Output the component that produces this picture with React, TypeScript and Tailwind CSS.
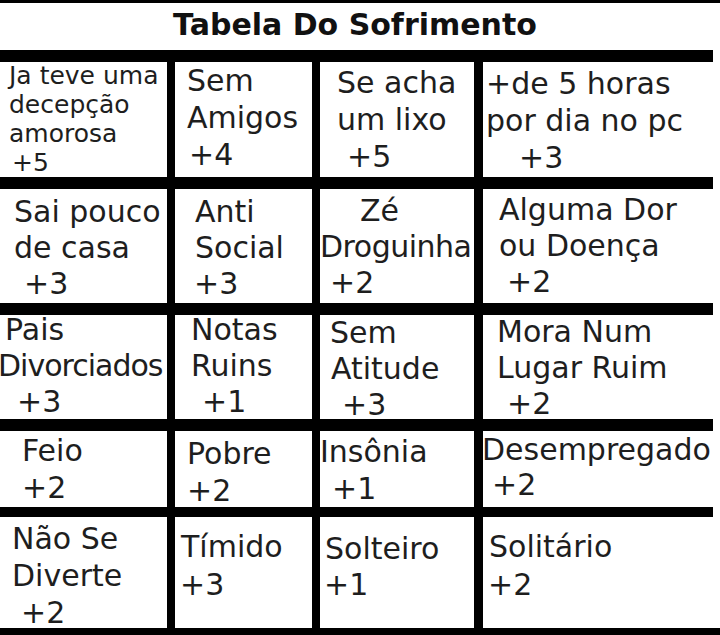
import clsx from "clsx";

type Line = [string, string?];
type Cell = { cls: string; lines: Line[] };
type Row = { cls: string; cells: Cell[] };

// column widths incl. the black separator on the left of cols 2-4
const cols = [
  "w-[167px]",
  "w-[145px] border-l-[8px] border-black",
  "w-[162px] border-l-[8px] border-black",
  "w-[239px] border-l-[9px] border-black",
];

const rows: Row[] = [
  {
    cls: "h-[127px] border-t-[12px]",
    cells: [
      {
        cls: "text-[25px] leading-[29px] pl-[9px] -mt-[1px]",
        lines: [["Ja teve uma"], ["decepção"], ["amorosa"], ["+5", "pl-[3px]"]],
      },
      { cls: "text-[30px] leading-[37px] pl-[12px]", lines: [["Sem"], ["Amigos"], ["+4", "pl-[2px]"]] },
      { cls: "text-[30px] leading-[37px] pl-[17px] pt-[2px]", lines: [["Se acha"], ["um lixo"], ["+5", "pl-[10px]"]] },
      { cls: "text-[30px] leading-[37px] pl-[3px] pt-[3px]", lines: [["+de 5 horas"], ["por dia no pc"], ["+3", "pl-[33px]"]] },
    ],
  },
  {
    cls: "h-[126px] border-t-[12px]",
    cells: [
      { cls: "text-[30px] leading-[36px] pl-[14px] pt-[5px]", lines: [["Sai pouco"], ["de casa"], ["+3", "pl-[10px]"]] },
      { cls: "text-[30px] leading-[36px] pl-[20px] pt-[5px]", lines: [["Anti"], ["Social"], ["+3", "-ml-[1px]"]] },
      {
        cls: "text-[30px] leading-[36px] pl-0 pt-[4px]",
        lines: [["Zé", "pl-[40px]"], ["Droguinha", "tracking-[-0.5px]"], ["+2", "pl-[10px]"]],
      },
      { cls: "text-[30px] leading-[36px] pl-[16px] pt-[3px]", lines: [["Alguma Dor"], ["ou Doença"], ["+2", "pl-[8px]"]] },
    ],
  },
  {
    cls: "h-[116px] border-t-[12px]",
    cells: [
      {
        cls: "text-[30px] leading-[36px] pl-0 -mt-[3px]",
        lines: [["Pais", "pl-[5px]"], ["Divorciados", "-ml-[2px] tracking-[-1px]"], ["+3", "pl-[17px]"]],
      },
      { cls: "text-[30px] leading-[36px] pl-[16px] -mt-[3px]", lines: [["Notas"], ["Ruins"], ["+1", "pl-[11px]"]] },
      { cls: "text-[30px] leading-[36px] pl-[10px]", lines: [["Sem"], ["Atitude", "pl-[1px]"], ["+3", "pl-[12px]"]] },
      { cls: "text-[30px] leading-[36px] pl-[14px] -mt-[1px]", lines: [["Mora Num"], ["Lugar Ruim"], ["+2", "pl-[10px]"]] },
    ],
  },
  {
    cls: "h-[88px] border-t-[12px]",
    cells: [
      { cls: "text-[30px] leading-[37px] pl-[22px] pt-[1px]", lines: [["Feio"], ["+2"]] },
      { cls: "text-[30px] leading-[37px] pl-[12px] pt-[4px]", lines: [["Pobre"], ["+2"]] },
      { cls: "text-[30px] leading-[37px] pl-0 pt-[2px]", lines: [["Insônia"], ["+1", "pl-[12px]"]] },
      { cls: "text-[30px] leading-[35px] pl-0 pt-[1px]", lines: [["Desempregado", "-ml-[1px]"], ["+2", "pl-[9px]"]] },
    ],
  },
  {
    cls: "h-[121px] border-t-[10px]",
    cells: [
      { cls: "text-[30px] leading-[37px] pl-[12px] pt-[3px]", lines: [["Não Se"], ["Diverte"], ["+2", "pl-[9px]"]] },
      { cls: "text-[30px] leading-[38px] pl-[6px] pt-[11px]", lines: [["Tímido"], ["+3", "-ml-[1px]"]] },
      { cls: "text-[30px] leading-[36px] pl-[5px] pt-[14px]", lines: [["Solteiro"], ["+1", "-ml-[1px]"]] },
      { cls: "text-[30px] leading-[38px] pl-[6px] pt-[11px]", lines: [["Solitário"], ["+2", "-ml-[1px]"]] },
    ],
  },
];

export default function App() {
  return (
    <div className="w-[720px] h-[635px] overflow-hidden bg-white border-t-[3px] border-black font-['DejaVu_Sans',sans-serif] text-[#1e1e1e]">
      <div className="h-[47px] pb-[5px] flex items-center justify-center pr-[10px] text-[30px] font-bold text-[#111]">
        Tabela Do Sofrimento
      </div>

      <div className="w-[713px]">
        {rows.map((row, r) => (
          <div key={r} className={clsx("flex border-black", row.cls)}>
            {row.cells.map((cell, c) => (
              <div key={c} className={clsx("shrink-0", cols[c])}>
                <div className={clsx("whitespace-nowrap", cell.cls)}>
                  {cell.lines.map(([text, indent], i) => (
                    <div key={i} className={indent}>
                      {text}
                    </div>
                  ))}
                </div>
              </div>
            ))}
          </div>
        ))}
      </div>

      <div className="h-[7px] bg-black" />
    </div>
  );
}
